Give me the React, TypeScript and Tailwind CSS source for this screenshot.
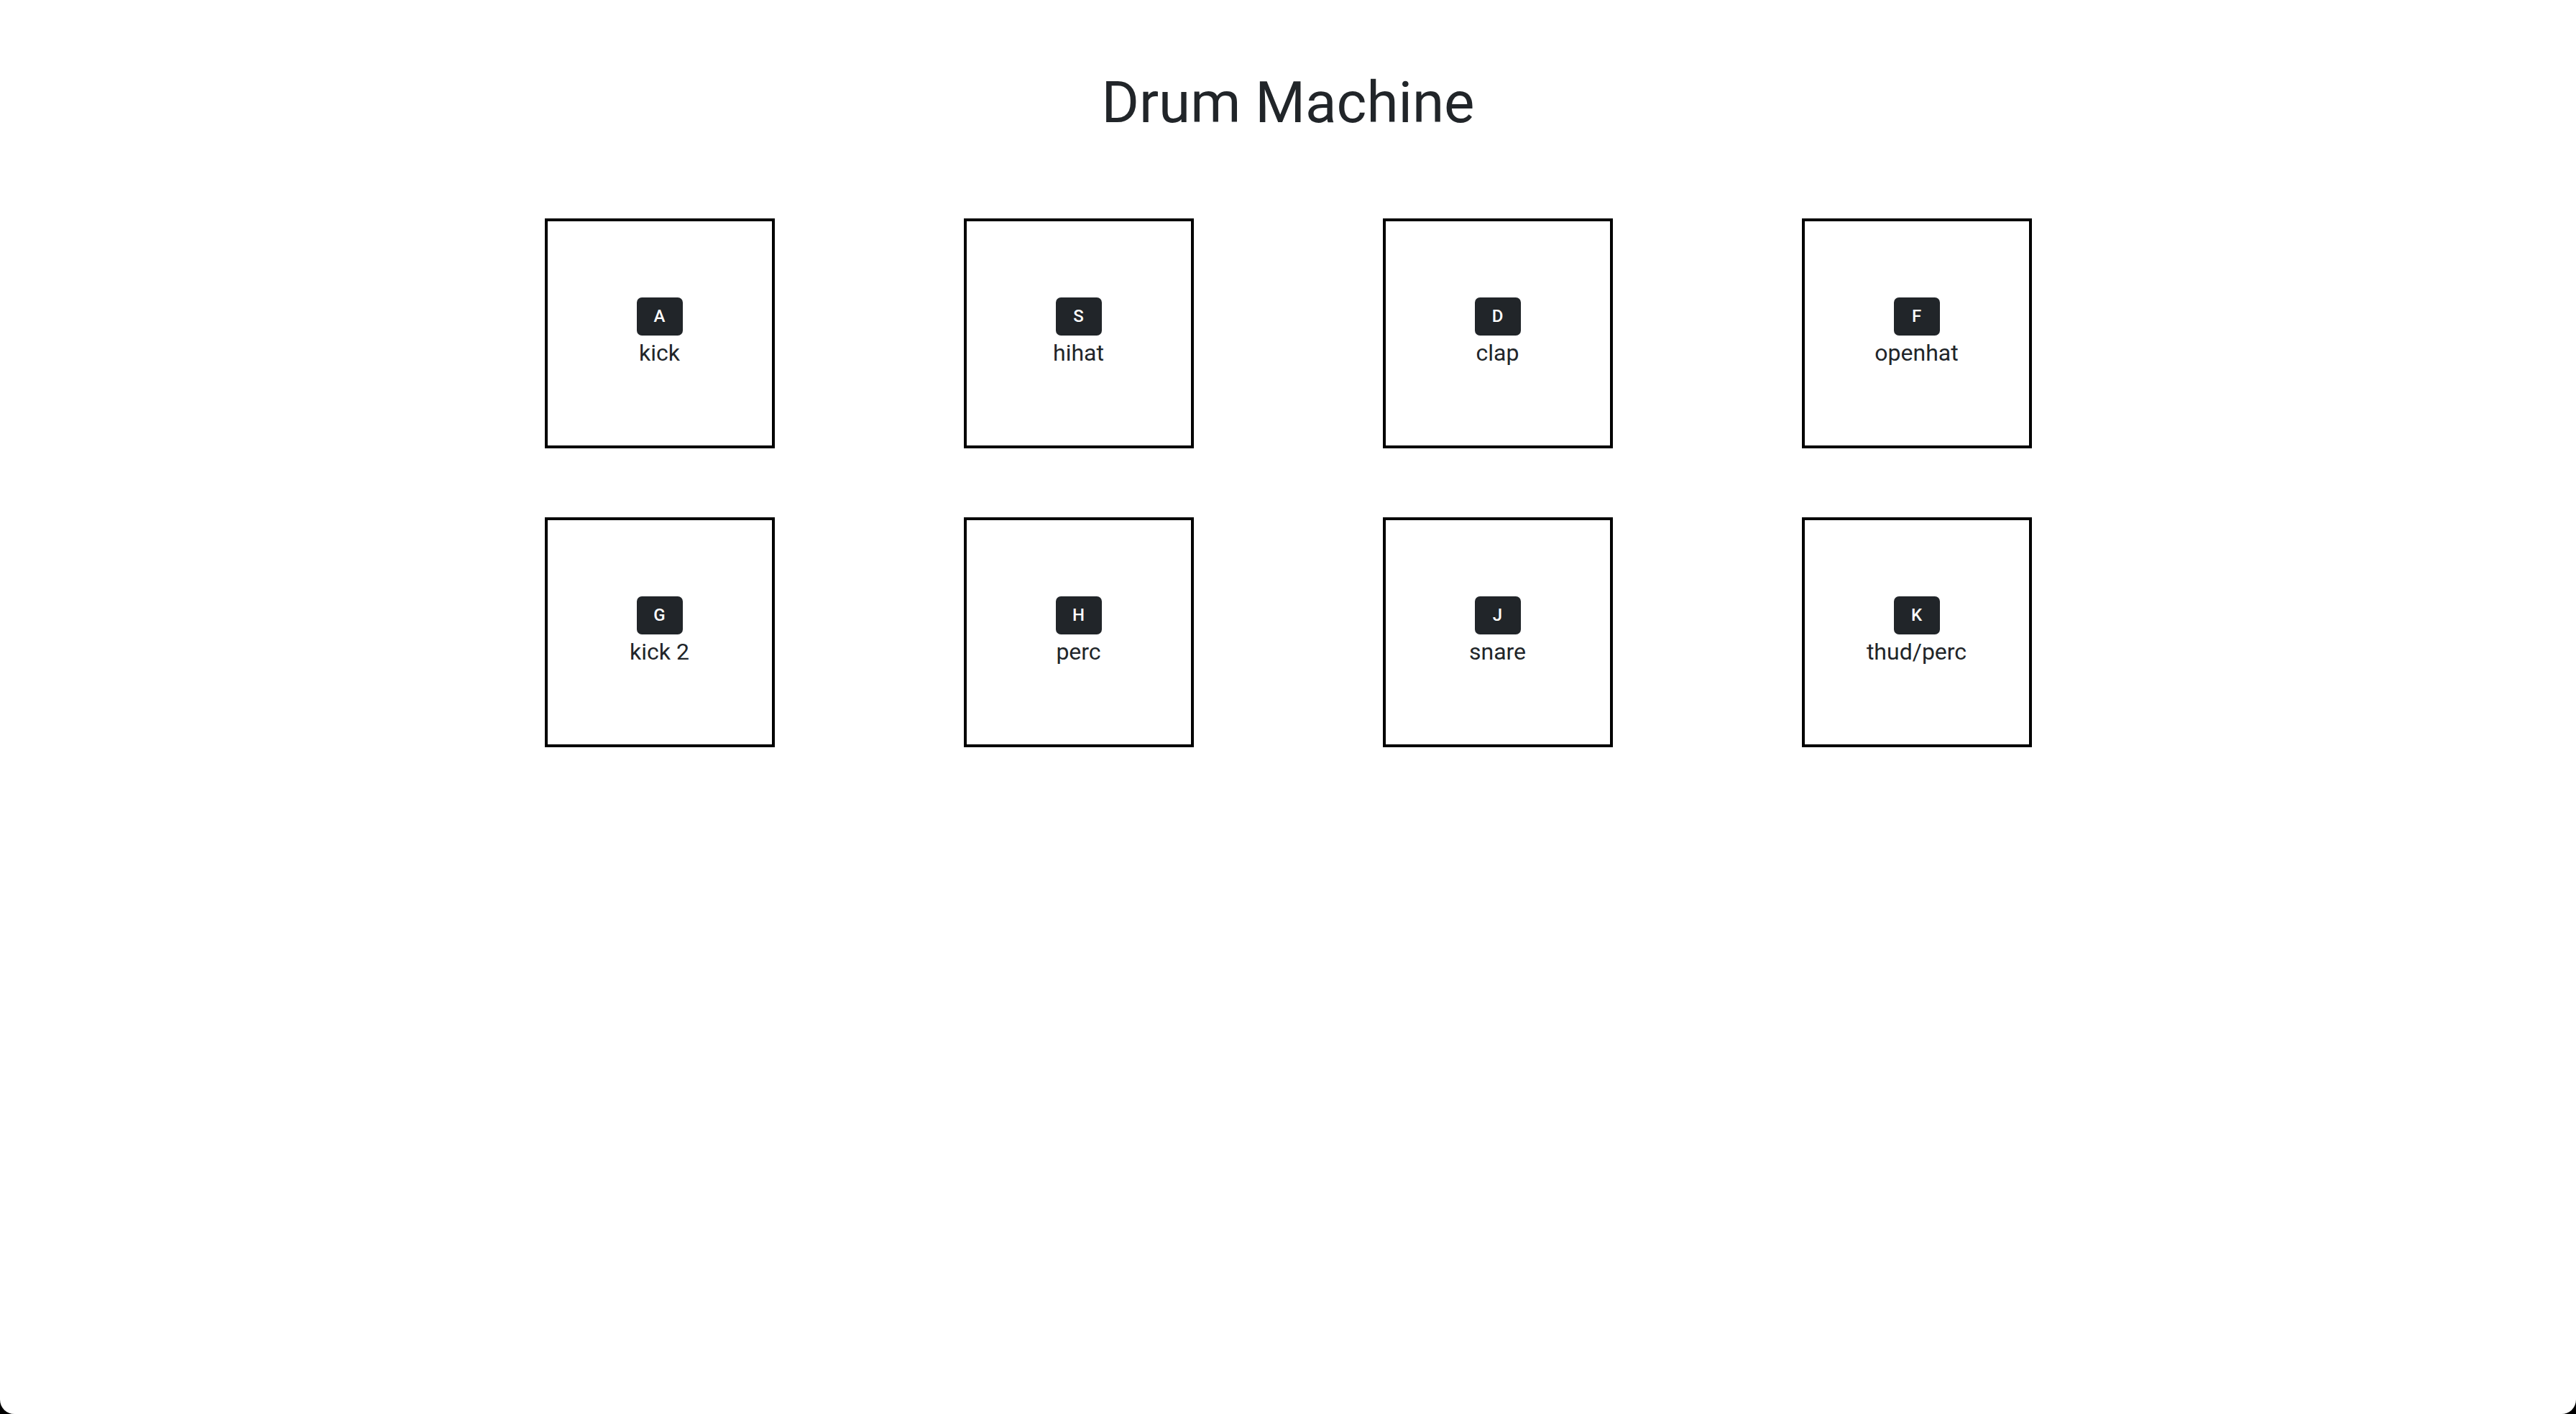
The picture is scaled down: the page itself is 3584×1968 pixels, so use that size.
const pads = [
  { key: "A", name: "kick" },
  { key: "S", name: "hihat" },
  { key: "D", name: "clap" },
  { key: "F", name: "openhat" },
  { key: "G", name: "kick 2" },
  { key: "H", name: "perc" },
  { key: "J", name: "snare" },
  { key: "K", name: "thud/perc" },
];

function Pad({ k, name }: { k: string; name: string }) {
  return (
    <div className="w-[320px] h-[320px] border-4 border-black flex flex-col items-center justify-center">
      <span className="w-[64px] h-[53px] rounded-[7px] bg-[#212529] text-white text-[24px] font-medium flex items-center justify-center">
        {k}
      </span>
      <span className="text-[32px] leading-[48px] text-[#212529]">{name}</span>
    </div>
  );
}

export default function App() {
  return (
    <div className="bg-black min-h-screen font-['Roboto',sans-serif]">
      <div className="bg-white h-[1968px] rounded-b-[20px] pt-[95px]">
        <h1 className="text-center text-[80px] leading-[96px] font-normal text-[#212529]">Drum Machine</h1>
        <div className="mt-[113px] grid grid-cols-[repeat(4,320px)] gap-x-[263px] gap-y-[96px] justify-center">
          {pads.map((p) => (
            <Pad key={p.key} k={p.key} name={p.name} />
          ))}
        </div>
      </div>
    </div>
  );
}
